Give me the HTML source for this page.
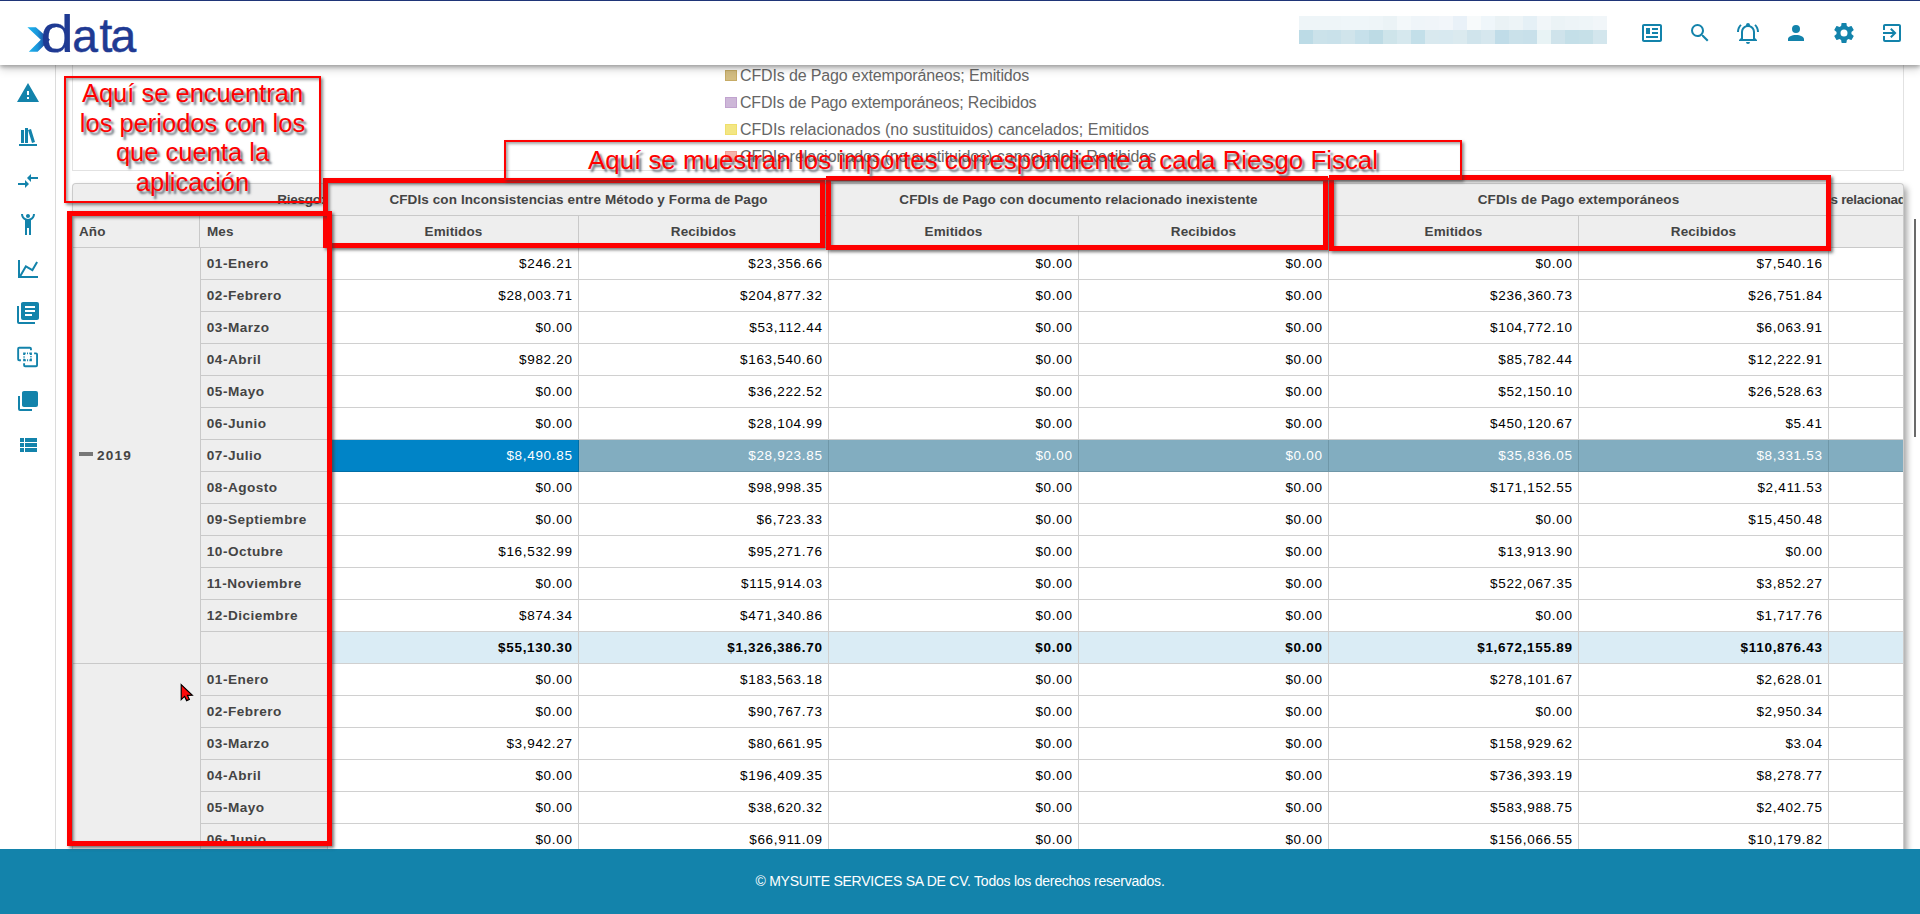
<!DOCTYPE html>
<html lang="es"><head><meta charset="utf-8"><title>xdata</title>
<style>
*{box-sizing:border-box;margin:0;padding:0}
html,body{width:1920px;height:914px;overflow:hidden;background:#fff;font-family:"Liberation Sans",sans-serif}
.abs{position:absolute}
.ic{position:absolute;display:block}
#topbar{position:absolute;left:0;top:0;width:1920px;height:65px;background:#fff;border-top:1px solid #1f3578;box-shadow:0 2px 4px rgba(0,0,0,.28),0 4px 9px rgba(0,0,0,.18);z-index:20}
#side{position:absolute;left:0;top:65px;width:56px;height:784px;background:#fff;border-right:1px solid #dcdcdc;z-index:5}
#main{position:absolute;left:56px;top:65px;width:1864px;height:784px;background:#fff;overflow:hidden}
#footer{position:absolute;left:0;top:849px;width:1920px;height:65px;background:#1383ab;color:#fff;font-size:14px;letter-spacing:-.24px;text-align:center;line-height:65px;z-index:30}
#panel{position:absolute;left:72px;top:-20px;width:1832px;height:126px;background:#fff;border:1px solid #e2e2e2;z-index:1}
.lg{position:absolute;left:725.4px;width:11.3px;height:11.3px;border:1px solid}
.lt{position:absolute;left:740px;font-size:16px;color:#666;white-space:nowrap;line-height:20px}
#grid{position:absolute;left:72px;top:184px;width:1832px;height:700px;background:#fff;border-radius:4px 4px 0 0;overflow:hidden;box-shadow:3px 3px 6px rgba(0,0,0,.36);z-index:2}
.hc{position:absolute;background:#eee;border-right:1px solid #c9c9c9;border-bottom:1px solid #c9c9c9;font-weight:bold;font-size:13.5px;letter-spacing:.1px;color:#444;text-align:center;line-height:32px;height:32px;white-space:nowrap;overflow:hidden}
.rl{position:absolute;background:#eee;border-right:1px solid #c9c9c9;border-bottom:1px solid #c9c9c9;font-weight:bold;font-size:13.6px;letter-spacing:.48px;color:#444;line-height:32px;height:32px;padding-left:5.8px;white-space:nowrap}
.dc{position:absolute;border-right:1px solid #d0d0d0;border-bottom:1px solid #d0d0d0;font-size:13.5px;letter-spacing:.68px;color:#000;text-align:right;line-height:32px;height:32px;padding-right:5.4px;white-space:nowrap;width:250px}
.tot .dc{background:#daecf5;font-weight:bold;letter-spacing:.7px}
.sel .dc{background:#82adc0;color:#fff;border-color:#6f97a8}
.sel .dc.first{background:#0084c7;border-color:#006ea6}
.rbox{position:absolute;border:5px solid #fe0000;z-index:40;box-shadow:2px 2px 3px rgba(60,60,60,.7), inset 2px 2px 3px rgba(60,60,60,.55)}
.tbox{position:absolute;border:2px solid #fe0000;z-index:41;color:#fe0000;font-size:26px;text-align:center;text-shadow:2.5px 2.5px 2.2px rgba(70,80,92,.8);box-shadow:2px 2px 3px rgba(60,60,60,.6), inset 2px 2px 3px rgba(60,60,60,.45)}
</style></head><body>

<div id="topbar">
<svg class="ic" style="left:20px;top:7px" width="130" height="52" viewBox="20 8 130 52">
<defs><linearGradient id="lgx" gradientUnits="userSpaceOnUse" x1="27" y1="0" x2="50" y2="0"><stop offset="0" stop-color="#1cb8f0"/><stop offset=".45" stop-color="#1a96db"/><stop offset=".85" stop-color="#1f3a93"/></linearGradient></defs>
<polygon fill="url(#lgx)" points="27.4,27.3 35.9,27.3 50,39.7 37.6,51.8 28.8,51.8 40.8,39.7"/>
<g font-family="Liberation Sans, sans-serif" font-size="46.2" fill="#1f3a93" stroke="#1f3a93" stroke-width="0.5">
<text transform="translate(40.6,51.6) scale(1.3,1.12)" stroke-width="0.15">d</text>
<text transform="translate(72.2,51.6)">a</text>
<text transform="translate(99.5,51.6) scale(1,1.06)">t</text>
<text transform="translate(110.4,51.6)">a</text>
</g>
</svg>
<div class="abs" style="left:1299px;top:15px;width:14px;height:14px;background:#eef5f8"></div>
<div class="abs" style="left:1299px;top:29px;width:14px;height:14px;background:#bcdbe6"></div>
<div class="abs" style="left:1313px;top:15px;width:14px;height:14px;background:#eef5f8"></div>
<div class="abs" style="left:1313px;top:29px;width:14px;height:14px;background:#cbe2ea"></div>
<div class="abs" style="left:1327px;top:15px;width:14px;height:14px;background:#eef5f8"></div>
<div class="abs" style="left:1327px;top:29px;width:14px;height:14px;background:#c9e1ea"></div>
<div class="abs" style="left:1341px;top:15px;width:14px;height:14px;background:#eff6f9"></div>
<div class="abs" style="left:1341px;top:29px;width:14px;height:14px;background:#d0e4eb"></div>
<div class="abs" style="left:1355px;top:15px;width:14px;height:14px;background:#eff6f9"></div>
<div class="abs" style="left:1355px;top:29px;width:14px;height:14px;background:#c6e0ea"></div>
<div class="abs" style="left:1369px;top:15px;width:14px;height:14px;background:#eef5f8"></div>
<div class="abs" style="left:1369px;top:29px;width:14px;height:14px;background:#bddbe5"></div>
<div class="abs" style="left:1383px;top:15px;width:14px;height:14px;background:#ebf3f6"></div>
<div class="abs" style="left:1383px;top:29px;width:14px;height:14px;background:#cee4ea"></div>
<div class="abs" style="left:1397px;top:15px;width:14px;height:14px;background:#f3f8fa"></div>
<div class="abs" style="left:1397px;top:29px;width:14px;height:14px;background:#d6e8ee"></div>
<div class="abs" style="left:1411px;top:15px;width:14px;height:14px;background:#eff5f9"></div>
<div class="abs" style="left:1411px;top:29px;width:14px;height:14px;background:#c3dfe9"></div>
<div class="abs" style="left:1425px;top:15px;width:14px;height:14px;background:#f0f5f9"></div>
<div class="abs" style="left:1425px;top:29px;width:14px;height:14px;background:#d9e9ef"></div>
<div class="abs" style="left:1439px;top:15px;width:14px;height:14px;background:#f2f6fa"></div>
<div class="abs" style="left:1439px;top:29px;width:14px;height:14px;background:#d8e9f0"></div>
<div class="abs" style="left:1453px;top:15px;width:14px;height:14px;background:#e9f1f8"></div>
<div class="abs" style="left:1453px;top:29px;width:14px;height:14px;background:#dbeaef"></div>
<div class="abs" style="left:1467px;top:15px;width:14px;height:14px;background:#f7fafb"></div>
<div class="abs" style="left:1467px;top:29px;width:14px;height:14px;background:#d0e4ec"></div>
<div class="abs" style="left:1481px;top:15px;width:14px;height:14px;background:#eff6fa"></div>
<div class="abs" style="left:1481px;top:29px;width:14px;height:14px;background:#d6e7ee"></div>
<div class="abs" style="left:1495px;top:15px;width:14px;height:14px;background:#eaf2f5"></div>
<div class="abs" style="left:1495px;top:29px;width:14px;height:14px;background:#c0dce8"></div>
<div class="abs" style="left:1509px;top:15px;width:14px;height:14px;background:#edf4f7"></div>
<div class="abs" style="left:1509px;top:29px;width:14px;height:14px;background:#cae1ea"></div>
<div class="abs" style="left:1523px;top:15px;width:14px;height:14px;background:#e5f0f6"></div>
<div class="abs" style="left:1523px;top:29px;width:14px;height:14px;background:#c8e0ea"></div>
<div class="abs" style="left:1537px;top:15px;width:14px;height:14px;background:#f1f6f9"></div>
<div class="abs" style="left:1537px;top:29px;width:14px;height:14px;background:#e8f3f5"></div>
<div class="abs" style="left:1551px;top:15px;width:14px;height:14px;background:#ebf3f6"></div>
<div class="abs" style="left:1551px;top:29px;width:14px;height:14px;background:#cfe3eb"></div>
<div class="abs" style="left:1565px;top:15px;width:14px;height:14px;background:#edf4f7"></div>
<div class="abs" style="left:1565px;top:29px;width:14px;height:14px;background:#c4dfe8"></div>
<div class="abs" style="left:1579px;top:15px;width:14px;height:14px;background:#eef5f8"></div>
<div class="abs" style="left:1579px;top:29px;width:14px;height:14px;background:#c6e0e8"></div>
<div class="abs" style="left:1593px;top:15px;width:14px;height:14px;background:#f1f6f9"></div>
<div class="abs" style="left:1593px;top:29px;width:14px;height:14px;background:#d3e6ed"></div>
<svg class="ic" style="left:1640.2px;top:20px" width="24" height="24" viewBox="0 0 24 24"><path fill="#1383ab" fill-rule="evenodd" d="M20 5L20 19L4 19L4 5H20M20 3H4C2.89 3 2 3.89 2 5V19C2 20.11 2.89 21 4 21H20C21.11 21 22 20.11 22 19V5C22 3.89 21.11 3 20 3M18 15H6V17H18V15M10 7H6V13H10V7M12 9H18V7H12V9M18 11H12V13H18V11Z"/></svg>
<svg class="ic" style="left:1688.2px;top:20px" width="24" height="24" viewBox="0 0 24 24"><path fill="#1383ab" fill-rule="evenodd" d="M9.5,3A6.5,6.5 0 0,1 16,9.5C16,11.11 15.41,12.59 14.44,13.73L14.71,14H15.5L20.5,19L19,20.5L14,15.5V14.71L13.73,14.44C12.59,15.41 11.11,16 9.5,16A6.5,6.5 0 0,1 3,9.5A6.5,6.5 0 0,1 9.5,3M9.5,5C7,5 5,7 5,9.5C5,12 7,14 9.5,14C12,14 14,12 14,9.5C14,7 12,5 9.5,5Z"/></svg>
<svg class="ic" style="left:1736.2px;top:20px" width="24" height="24" viewBox="0 0 24 24"><path fill="#1383ab" fill-rule="evenodd" d="M10,21H14A2,2 0 0,1 12,23A2,2 0 0,1 10,21M21,19V20H3V19L5,17V11C5,7.9 7.03,5.17 10,4.29C10,4.19 10,4.1 10,4A2,2 0 0,1 12,2A2,2 0 0,1 14,4C14,4.1 14,4.19 14,4.29C16.97,5.17 19,7.9 19,11V17L21,19M17,11A5,5 0 0,0 12,6A5,5 0 0,0 7,11V18H17V11M19.75,3.19L18.33,4.61C20.04,6.3 21,8.6 21,11H23C23,8.07 21.84,5.25 19.75,3.19M1,11H3C3,8.6 3.96,6.3 5.67,4.61L4.25,3.19C2.16,5.25 1,8.07 1,11Z"/></svg>
<svg class="ic" style="left:1784.2px;top:20px" width="24" height="24" viewBox="0 0 24 24"><path fill="#1383ab" fill-rule="evenodd" d="M12,4A4,4 0 0,1 16,8A4,4 0 0,1 12,12A4,4 0 0,1 8,8A4,4 0 0,1 12,4M12,14C16.42,14 20,15.79 20,18V20H4V18C4,15.79 7.58,14 12,14Z"/></svg>
<svg class="ic" style="left:1832.2px;top:20px" width="24" height="24" viewBox="0 0 24 24"><path fill="#1383ab" fill-rule="evenodd" d="M12,15.5A3.5,3.5 0 0,1 8.5,12A3.5,3.5 0 0,1 12,8.5A3.5,3.5 0 0,1 15.5,12A3.5,3.5 0 0,1 12,15.5M19.43,12.97C19.47,12.65 19.5,12.33 19.5,12C19.5,11.67 19.47,11.34 19.43,11L21.54,9.37C21.73,9.22 21.78,8.95 21.66,8.73L19.66,5.27C19.54,5.05 19.27,4.96 19.05,5.05L16.56,6.05C16.04,5.66 15.5,5.32 14.87,5.07L14.5,2.42C14.46,2.18 14.25,2 14,2H10C9.75,2 9.54,2.18 9.5,2.42L9.13,5.07C8.5,5.32 7.96,5.66 7.44,6.05L4.95,5.05C4.73,4.96 4.46,5.05 4.34,5.27L2.34,8.73C2.21,8.95 2.27,9.22 2.46,9.37L4.57,11C4.53,11.34 4.5,11.67 4.5,12C4.5,12.33 4.53,12.65 4.57,12.97L2.46,14.63C2.27,14.78 2.21,15.05 2.34,15.27L4.34,18.73C4.46,18.95 4.73,19.03 4.95,18.95L7.44,17.94C7.96,18.34 8.5,18.68 9.13,18.93L9.5,21.58C9.54,21.82 9.75,22 10,22H14C14.25,22 14.46,21.82 14.5,21.58L14.87,18.93C15.5,18.67 16.04,18.34 16.56,17.94L19.05,18.95C19.27,19.03 19.54,18.95 19.66,18.73L21.66,15.27C21.78,15.05 21.73,14.78 21.54,14.63L19.43,12.97Z"/></svg>
<svg class="ic" style="left:1880.2px;top:20px" width="24" height="24" viewBox="0 0 24 24"><path fill="#1383ab" fill-rule="evenodd" d="M19,3H5C3.89,3 3,3.89 3,5V9H5V5H19V19H5V15H3V19A2,2 0 0,0 5,21H19A2,2 0 0,0 21,19V5C21,3.89 20.1,3 19,3M10.08,15.58L11.5,17L16.5,12L11.5,7L10.08,8.41L12.67,11H3V13H12.67L10.08,15.58Z"/></svg>
</div>
<div id="side">
<svg class="ic" style="left:16px;top:15.5px" width="24" height="24" viewBox="0 0 24 24"><path fill="#1383ab" fill-rule="evenodd" d="M13,14H11V10H13M13,18H11V16H13M1,21H23L12,2L1,21Z"/></svg>
<svg class="ic" style="left:16px;top:59.7px" width="24" height="24" viewBox="0 0 24 24"><path fill="#1383ab" fill-rule="evenodd" d="M9 3V18H12V3H9M12 5L16 18L19 17L15 4L12 5M5 5V18H8V5H5M3 19V21H21V19H3Z"/></svg>
<svg class="ic" style="left:16px;top:104px" width="24" height="24" viewBox="0 0 24 24"><path fill="#1383ab" fill-rule="evenodd" d="M9.01 14H2v2h7.01v3L13 15l-3.99-4v3zm5.98-1v-3H22V8h-7.01V5L11 9l3.99 4z"/></svg>
<svg class="ic" style="left:16px;top:148px" width="24" height="24" viewBox="0 0 24 24"><path fill="#1383ab" fill-rule="evenodd" d="M5,1C5,3.7 6.56,6.16 9,7.32V22H11V15H13V22H15V7.31C17.44,6.16 19,3.7 19,1H17A5,5 0 0,1 12,6A5,5 0 0,1 7,1M12,1C10.89,1 10,1.89 10,3C10,4.11 10.89,5 12,5C13.11,5 14,4.11 14,3C14,1.89 13.11,1 12,1Z"/></svg>
<svg class="ic" style="left:16px;top:192px" width="24" height="24" viewBox="0 0 24 24"><path fill="#1383ab" fill-rule="evenodd" d="M16,11.78L20.24,4.45L21.97,5.45L16.74,14.5L10.23,10.75L5.46,19H22V21H2V3H4V17.54L9.5,8L16,11.78Z"/></svg>
<svg class="ic" style="left:16px;top:235.8px" width="24" height="24" viewBox="0 0 24 24"><path fill="#1383ab" fill-rule="evenodd" d="M16,15H9V13H16V15M19,11H9V9H19V11M19,7H9V5H19V7M3,5V21H19V23H3A2,2 0 0,1 1,21V5H3M21,1A2,2 0 0,1 23,3V17C23,18.11 22.11,19 21,19H7A2,2 0 0,1 5,17V3C5,1.89 5.89,1 7,1H21Z"/></svg>
<svg class="ic" style="left:16px;top:279.5px" width="24" height="24" viewBox="0 0 24 24" fill="none" stroke="#1383ab" stroke-width="1.9"><path d="M4.9,15.2H3.15a1,1 0 0 1 -1,-1V3.7a1,1 0 0 1 1,-1H13.95a1,1 0 0 1 1,1V5.2"/><path d="M18.1,8.4H20.05a1,1 0 0 1 1,1V20.3a1,1 0 0 1 -1,1H9.1a1,1 0 0 1 -1,-1V18.3"/><path stroke-dasharray="3.2 1.3 1.0 1.3" stroke-dashoffset="1.6" d="M8.1,8.4H14.95V15.2H8.1Z"/></svg>
<svg class="ic" style="left:16px;top:324px" width="24" height="24" viewBox="0 0 24 24"><path fill="#1383ab" fill-rule="evenodd" d="M22,16A2,2 0 0,1 20,18H8C6.89,18 6,17.1 6,16V4C6,2.89 6.89,2 8,2H20A2,2 0 0,1 22,4V16M16,20V22H4A2,2 0 0,1 2,20V7H4V20H16Z"/></svg>
<svg class="ic" style="left:16px;top:368px" width="24" height="24" viewBox="0 0 24 24"><path fill="#1383ab" fill-rule="evenodd" d="M9,5V9H21V5M9,19H21V15H9M9,14H21V10H9M4,9H8V5H4M4,19H8V15H4M4,14H8V10H4V14Z"/></svg>
</div>
<div id="main" style="left:0;width:1920px">
<div id="panel"></div>
<div class="lg" style="top:5px;background:#d3bd82;border-color:#c6ab65;z-index:3"></div>
<div class="lt" style="top:1px;z-index:3;letter-spacing:-0.14px">CFDIs de Pago extemporáneos; Emitidos</div>
<div class="lg" style="top:32px;background:#cdb7d8;border-color:#c1a3cf;z-index:3"></div>
<div class="lt" style="top:28px;z-index:3;letter-spacing:-0.18px">CFDIs de Pago extemporáneos; Recibidos</div>
<div class="lg" style="top:59px;background:#f3e683;border-color:#efdf6c;z-index:3"></div>
<div class="lt" style="top:55px;z-index:3;letter-spacing:0px">CFDIs relacionados (no sustituidos) cancelados; Emitidos</div>
<div class="lg" style="top:86px;background:#f4b3ab;border-color:#f09f95;z-index:3"></div>
<div class="lt" style="top:82px;z-index:3;letter-spacing:-0.03px">CFDIs relacionados (no sustituidos) cancelados; Recibidos</div>
<div id="grid" style="top:119px">
<div class="hc" style="left:0;top:0;width:257px;text-align:right;border-right:none;padding-right:4px;letter-spacing:-.25px">Riesgo:</div>
<div class="hc" style="left:257px;top:0;width:500px">CFDIs con Inconsistencias entre Método y Forma de Pago</div>
<div class="hc" style="left:757px;top:0;width:500px">CFDIs de Pago con documento relacionado inexistente</div>
<div class="hc" style="left:1257px;top:0;width:500px">CFDIs de Pago extemporáneos</div>
<div class="hc" style="left:1757px;top:0;width:500px;text-align:left;padding-left:1.5px;letter-spacing:-.3px">s relacionados (no sustituidos) cancelados</div>
<div class="hc" style="left:0;top:32px;width:128px;text-align:left;padding-left:7px">Año</div>
<div class="hc" style="left:128px;top:32px;width:128px;text-align:left;padding-left:7px">Mes</div>
<div class="hc" style="left:257px;top:32px;width:250px">Emitidos</div>
<div class="hc" style="left:507px;top:32px;width:250px">Recibidos</div>
<div class="hc" style="left:757px;top:32px;width:250px">Emitidos</div>
<div class="hc" style="left:1007px;top:32px;width:250px">Recibidos</div>
<div class="hc" style="left:1257px;top:32px;width:250px">Emitidos</div>
<div class="hc" style="left:1507px;top:32px;width:250px">Recibidos</div>
<div class="hc" style="left:1757px;top:32px;width:250px"></div>
<div class="rl" style="left:0;top:64px;width:128px;height:416px;line-height:416px;border-right:none;padding-left:7px;letter-spacing:1.15px"><span style="display:inline-block;width:14px;height:4px;background:#777;vertical-align:middle;margin:-5px 4px 0 0"></span>2019</div>
<div class="rl" style="left:0;top:480px;width:128px;height:300px;border-right:none"></div>
<div class="row">
<div class="rl" style="left:128px;top:64px;width:128px;border-left:1px solid #c9c9c9">01-Enero</div>
<div class="dc" style="left:257px;top:64px">$246.21</div>
<div class="dc" style="left:507px;top:64px">$23,356.66</div>
<div class="dc" style="left:757px;top:64px">$0.00</div>
<div class="dc" style="left:1007px;top:64px">$0.00</div>
<div class="dc" style="left:1257px;top:64px">$0.00</div>
<div class="dc" style="left:1507px;top:64px">$7,540.16</div>
<div class="dc" style="left:1757px;top:64px"></div>
</div>
<div class="row">
<div class="rl" style="left:128px;top:96px;width:128px;border-left:1px solid #c9c9c9">02-Febrero</div>
<div class="dc" style="left:257px;top:96px">$28,003.71</div>
<div class="dc" style="left:507px;top:96px">$204,877.32</div>
<div class="dc" style="left:757px;top:96px">$0.00</div>
<div class="dc" style="left:1007px;top:96px">$0.00</div>
<div class="dc" style="left:1257px;top:96px">$236,360.73</div>
<div class="dc" style="left:1507px;top:96px">$26,751.84</div>
<div class="dc" style="left:1757px;top:96px"></div>
</div>
<div class="row">
<div class="rl" style="left:128px;top:128px;width:128px;border-left:1px solid #c9c9c9">03-Marzo</div>
<div class="dc" style="left:257px;top:128px">$0.00</div>
<div class="dc" style="left:507px;top:128px">$53,112.44</div>
<div class="dc" style="left:757px;top:128px">$0.00</div>
<div class="dc" style="left:1007px;top:128px">$0.00</div>
<div class="dc" style="left:1257px;top:128px">$104,772.10</div>
<div class="dc" style="left:1507px;top:128px">$6,063.91</div>
<div class="dc" style="left:1757px;top:128px"></div>
</div>
<div class="row">
<div class="rl" style="left:128px;top:160px;width:128px;border-left:1px solid #c9c9c9">04-Abril</div>
<div class="dc" style="left:257px;top:160px">$982.20</div>
<div class="dc" style="left:507px;top:160px">$163,540.60</div>
<div class="dc" style="left:757px;top:160px">$0.00</div>
<div class="dc" style="left:1007px;top:160px">$0.00</div>
<div class="dc" style="left:1257px;top:160px">$85,782.44</div>
<div class="dc" style="left:1507px;top:160px">$12,222.91</div>
<div class="dc" style="left:1757px;top:160px"></div>
</div>
<div class="row">
<div class="rl" style="left:128px;top:192px;width:128px;border-left:1px solid #c9c9c9">05-Mayo</div>
<div class="dc" style="left:257px;top:192px">$0.00</div>
<div class="dc" style="left:507px;top:192px">$36,222.52</div>
<div class="dc" style="left:757px;top:192px">$0.00</div>
<div class="dc" style="left:1007px;top:192px">$0.00</div>
<div class="dc" style="left:1257px;top:192px">$52,150.10</div>
<div class="dc" style="left:1507px;top:192px">$26,528.63</div>
<div class="dc" style="left:1757px;top:192px"></div>
</div>
<div class="row">
<div class="rl" style="left:128px;top:224px;width:128px;border-left:1px solid #c9c9c9">06-Junio</div>
<div class="dc" style="left:257px;top:224px">$0.00</div>
<div class="dc" style="left:507px;top:224px">$28,104.99</div>
<div class="dc" style="left:757px;top:224px">$0.00</div>
<div class="dc" style="left:1007px;top:224px">$0.00</div>
<div class="dc" style="left:1257px;top:224px">$450,120.67</div>
<div class="dc" style="left:1507px;top:224px">$5.41</div>
<div class="dc" style="left:1757px;top:224px"></div>
</div>
<div class="row sel">
<div class="rl" style="left:128px;top:256px;width:128px;border-left:1px solid #c9c9c9">07-Julio</div>
<div class="dc first" style="left:257px;top:256px">$8,490.85</div>
<div class="dc" style="left:507px;top:256px">$28,923.85</div>
<div class="dc" style="left:757px;top:256px">$0.00</div>
<div class="dc" style="left:1007px;top:256px">$0.00</div>
<div class="dc" style="left:1257px;top:256px">$35,836.05</div>
<div class="dc" style="left:1507px;top:256px">$8,331.53</div>
<div class="dc" style="left:1757px;top:256px"></div>
</div>
<div class="row">
<div class="rl" style="left:128px;top:288px;width:128px;border-left:1px solid #c9c9c9">08-Agosto</div>
<div class="dc" style="left:257px;top:288px">$0.00</div>
<div class="dc" style="left:507px;top:288px">$98,998.35</div>
<div class="dc" style="left:757px;top:288px">$0.00</div>
<div class="dc" style="left:1007px;top:288px">$0.00</div>
<div class="dc" style="left:1257px;top:288px">$171,152.55</div>
<div class="dc" style="left:1507px;top:288px">$2,411.53</div>
<div class="dc" style="left:1757px;top:288px"></div>
</div>
<div class="row">
<div class="rl" style="left:128px;top:320px;width:128px;border-left:1px solid #c9c9c9">09-Septiembre</div>
<div class="dc" style="left:257px;top:320px">$0.00</div>
<div class="dc" style="left:507px;top:320px">$6,723.33</div>
<div class="dc" style="left:757px;top:320px">$0.00</div>
<div class="dc" style="left:1007px;top:320px">$0.00</div>
<div class="dc" style="left:1257px;top:320px">$0.00</div>
<div class="dc" style="left:1507px;top:320px">$15,450.48</div>
<div class="dc" style="left:1757px;top:320px"></div>
</div>
<div class="row">
<div class="rl" style="left:128px;top:352px;width:128px;border-left:1px solid #c9c9c9">10-Octubre</div>
<div class="dc" style="left:257px;top:352px">$16,532.99</div>
<div class="dc" style="left:507px;top:352px">$95,271.76</div>
<div class="dc" style="left:757px;top:352px">$0.00</div>
<div class="dc" style="left:1007px;top:352px">$0.00</div>
<div class="dc" style="left:1257px;top:352px">$13,913.90</div>
<div class="dc" style="left:1507px;top:352px">$0.00</div>
<div class="dc" style="left:1757px;top:352px"></div>
</div>
<div class="row">
<div class="rl" style="left:128px;top:384px;width:128px;border-left:1px solid #c9c9c9">11-Noviembre</div>
<div class="dc" style="left:257px;top:384px">$0.00</div>
<div class="dc" style="left:507px;top:384px">$115,914.03</div>
<div class="dc" style="left:757px;top:384px">$0.00</div>
<div class="dc" style="left:1007px;top:384px">$0.00</div>
<div class="dc" style="left:1257px;top:384px">$522,067.35</div>
<div class="dc" style="left:1507px;top:384px">$3,852.27</div>
<div class="dc" style="left:1757px;top:384px"></div>
</div>
<div class="row">
<div class="rl" style="left:128px;top:416px;width:128px;border-left:1px solid #c9c9c9">12-Diciembre</div>
<div class="dc" style="left:257px;top:416px">$874.34</div>
<div class="dc" style="left:507px;top:416px">$471,340.86</div>
<div class="dc" style="left:757px;top:416px">$0.00</div>
<div class="dc" style="left:1007px;top:416px">$0.00</div>
<div class="dc" style="left:1257px;top:416px">$0.00</div>
<div class="dc" style="left:1507px;top:416px">$1,717.76</div>
<div class="dc" style="left:1757px;top:416px"></div>
</div>
<div class="row tot">
<div class="rl" style="left:128px;top:448px;width:128px;border-left:1px solid #c9c9c9"></div>
<div class="dc" style="left:257px;top:448px">$55,130.30</div>
<div class="dc" style="left:507px;top:448px">$1,326,386.70</div>
<div class="dc" style="left:757px;top:448px">$0.00</div>
<div class="dc" style="left:1007px;top:448px">$0.00</div>
<div class="dc" style="left:1257px;top:448px">$1,672,155.89</div>
<div class="dc" style="left:1507px;top:448px">$110,876.43</div>
<div class="dc" style="left:1757px;top:448px"></div>
</div>
<div class="row">
<div class="rl" style="left:128px;top:480px;width:128px;border-left:1px solid #c9c9c9">01-Enero</div>
<div class="dc" style="left:257px;top:480px">$0.00</div>
<div class="dc" style="left:507px;top:480px">$183,563.18</div>
<div class="dc" style="left:757px;top:480px">$0.00</div>
<div class="dc" style="left:1007px;top:480px">$0.00</div>
<div class="dc" style="left:1257px;top:480px">$278,101.67</div>
<div class="dc" style="left:1507px;top:480px">$2,628.01</div>
<div class="dc" style="left:1757px;top:480px"></div>
</div>
<div class="row">
<div class="rl" style="left:128px;top:512px;width:128px;border-left:1px solid #c9c9c9">02-Febrero</div>
<div class="dc" style="left:257px;top:512px">$0.00</div>
<div class="dc" style="left:507px;top:512px">$90,767.73</div>
<div class="dc" style="left:757px;top:512px">$0.00</div>
<div class="dc" style="left:1007px;top:512px">$0.00</div>
<div class="dc" style="left:1257px;top:512px">$0.00</div>
<div class="dc" style="left:1507px;top:512px">$2,950.34</div>
<div class="dc" style="left:1757px;top:512px"></div>
</div>
<div class="row">
<div class="rl" style="left:128px;top:544px;width:128px;border-left:1px solid #c9c9c9">03-Marzo</div>
<div class="dc" style="left:257px;top:544px">$3,942.27</div>
<div class="dc" style="left:507px;top:544px">$80,661.95</div>
<div class="dc" style="left:757px;top:544px">$0.00</div>
<div class="dc" style="left:1007px;top:544px">$0.00</div>
<div class="dc" style="left:1257px;top:544px">$158,929.62</div>
<div class="dc" style="left:1507px;top:544px">$3.04</div>
<div class="dc" style="left:1757px;top:544px"></div>
</div>
<div class="row">
<div class="rl" style="left:128px;top:576px;width:128px;border-left:1px solid #c9c9c9">04-Abril</div>
<div class="dc" style="left:257px;top:576px">$0.00</div>
<div class="dc" style="left:507px;top:576px">$196,409.35</div>
<div class="dc" style="left:757px;top:576px">$0.00</div>
<div class="dc" style="left:1007px;top:576px">$0.00</div>
<div class="dc" style="left:1257px;top:576px">$736,393.19</div>
<div class="dc" style="left:1507px;top:576px">$8,278.77</div>
<div class="dc" style="left:1757px;top:576px"></div>
</div>
<div class="row">
<div class="rl" style="left:128px;top:608px;width:128px;border-left:1px solid #c9c9c9">05-Mayo</div>
<div class="dc" style="left:257px;top:608px">$0.00</div>
<div class="dc" style="left:507px;top:608px">$38,620.32</div>
<div class="dc" style="left:757px;top:608px">$0.00</div>
<div class="dc" style="left:1007px;top:608px">$0.00</div>
<div class="dc" style="left:1257px;top:608px">$583,988.75</div>
<div class="dc" style="left:1507px;top:608px">$2,402.75</div>
<div class="dc" style="left:1757px;top:608px"></div>
</div>
<div class="row">
<div class="rl" style="left:128px;top:640px;width:128px;border-left:1px solid #c9c9c9">06-Junio</div>
<div class="dc" style="left:257px;top:640px">$0.00</div>
<div class="dc" style="left:507px;top:640px">$66,911.09</div>
<div class="dc" style="left:757px;top:640px">$0.00</div>
<div class="dc" style="left:1007px;top:640px">$0.00</div>
<div class="dc" style="left:1257px;top:640px">$156,066.55</div>
<div class="dc" style="left:1507px;top:640px">$10,179.82</div>
<div class="dc" style="left:1757px;top:640px"></div>
</div>
</div>
<div class="abs" style="left:72px;top:118px;width:1832px;height:700px;border:1px solid #cbcbcb;border-bottom:none;border-radius:4px 4px 0 0;z-index:6"></div>
<div class="abs" style="left:1914px;top:154px;width:2px;height:218px;background:#6a6a6a;z-index:3"></div>
</div>
<div class="rbox" style="left:323px;top:178px;width:502px;height:70px"></div>
<div class="rbox" style="left:826px;top:176px;width:502px;height:74px"></div>
<div class="rbox" style="left:1329px;top:175px;width:502px;height:76px"></div>
<div class="rbox" style="left:67px;top:211px;width:265px;height:635px"></div>
<div class="tbox" style="left:64px;top:76px;width:257px;height:127px;line-height:29.6px;font-size:25.5px;padding-top:1px">Aquí se encuentran<br>los periodos con los<br>que cuenta la<br>aplicación</div>
<div class="tbox" style="left:504px;top:140px;width:958px;height:40px;line-height:36px;font-size:25.9px">Aquí se muestran los importes correspondiente a cada Riesgo Fiscal</div>
<svg class="ic" style="left:176px;top:680px;z-index:50" width="22" height="26" viewBox="176 680 22 26"><path d="M181.2,684.6 L181.2,699.6 L184.6,696.4 L186.6,700.6 L189.4,699.4 L187.5,695.4 L192,695.3 Z" fill="#ff0a0a" stroke="#fff" stroke-width="2.2" stroke-linejoin="round" opacity=".9"/><path d="M181.2,684.6 L181.2,699.6 L184.6,696.4 L186.6,700.6 L189.4,699.4 L187.5,695.4 L192.3,695.3 Z" fill="#ff0a0a" stroke="#000" stroke-width="1.2"/></svg>
<div id="footer">© MYSUITE SERVICES SA DE CV. Todos los derechos reservados.</div>
</body></html>
